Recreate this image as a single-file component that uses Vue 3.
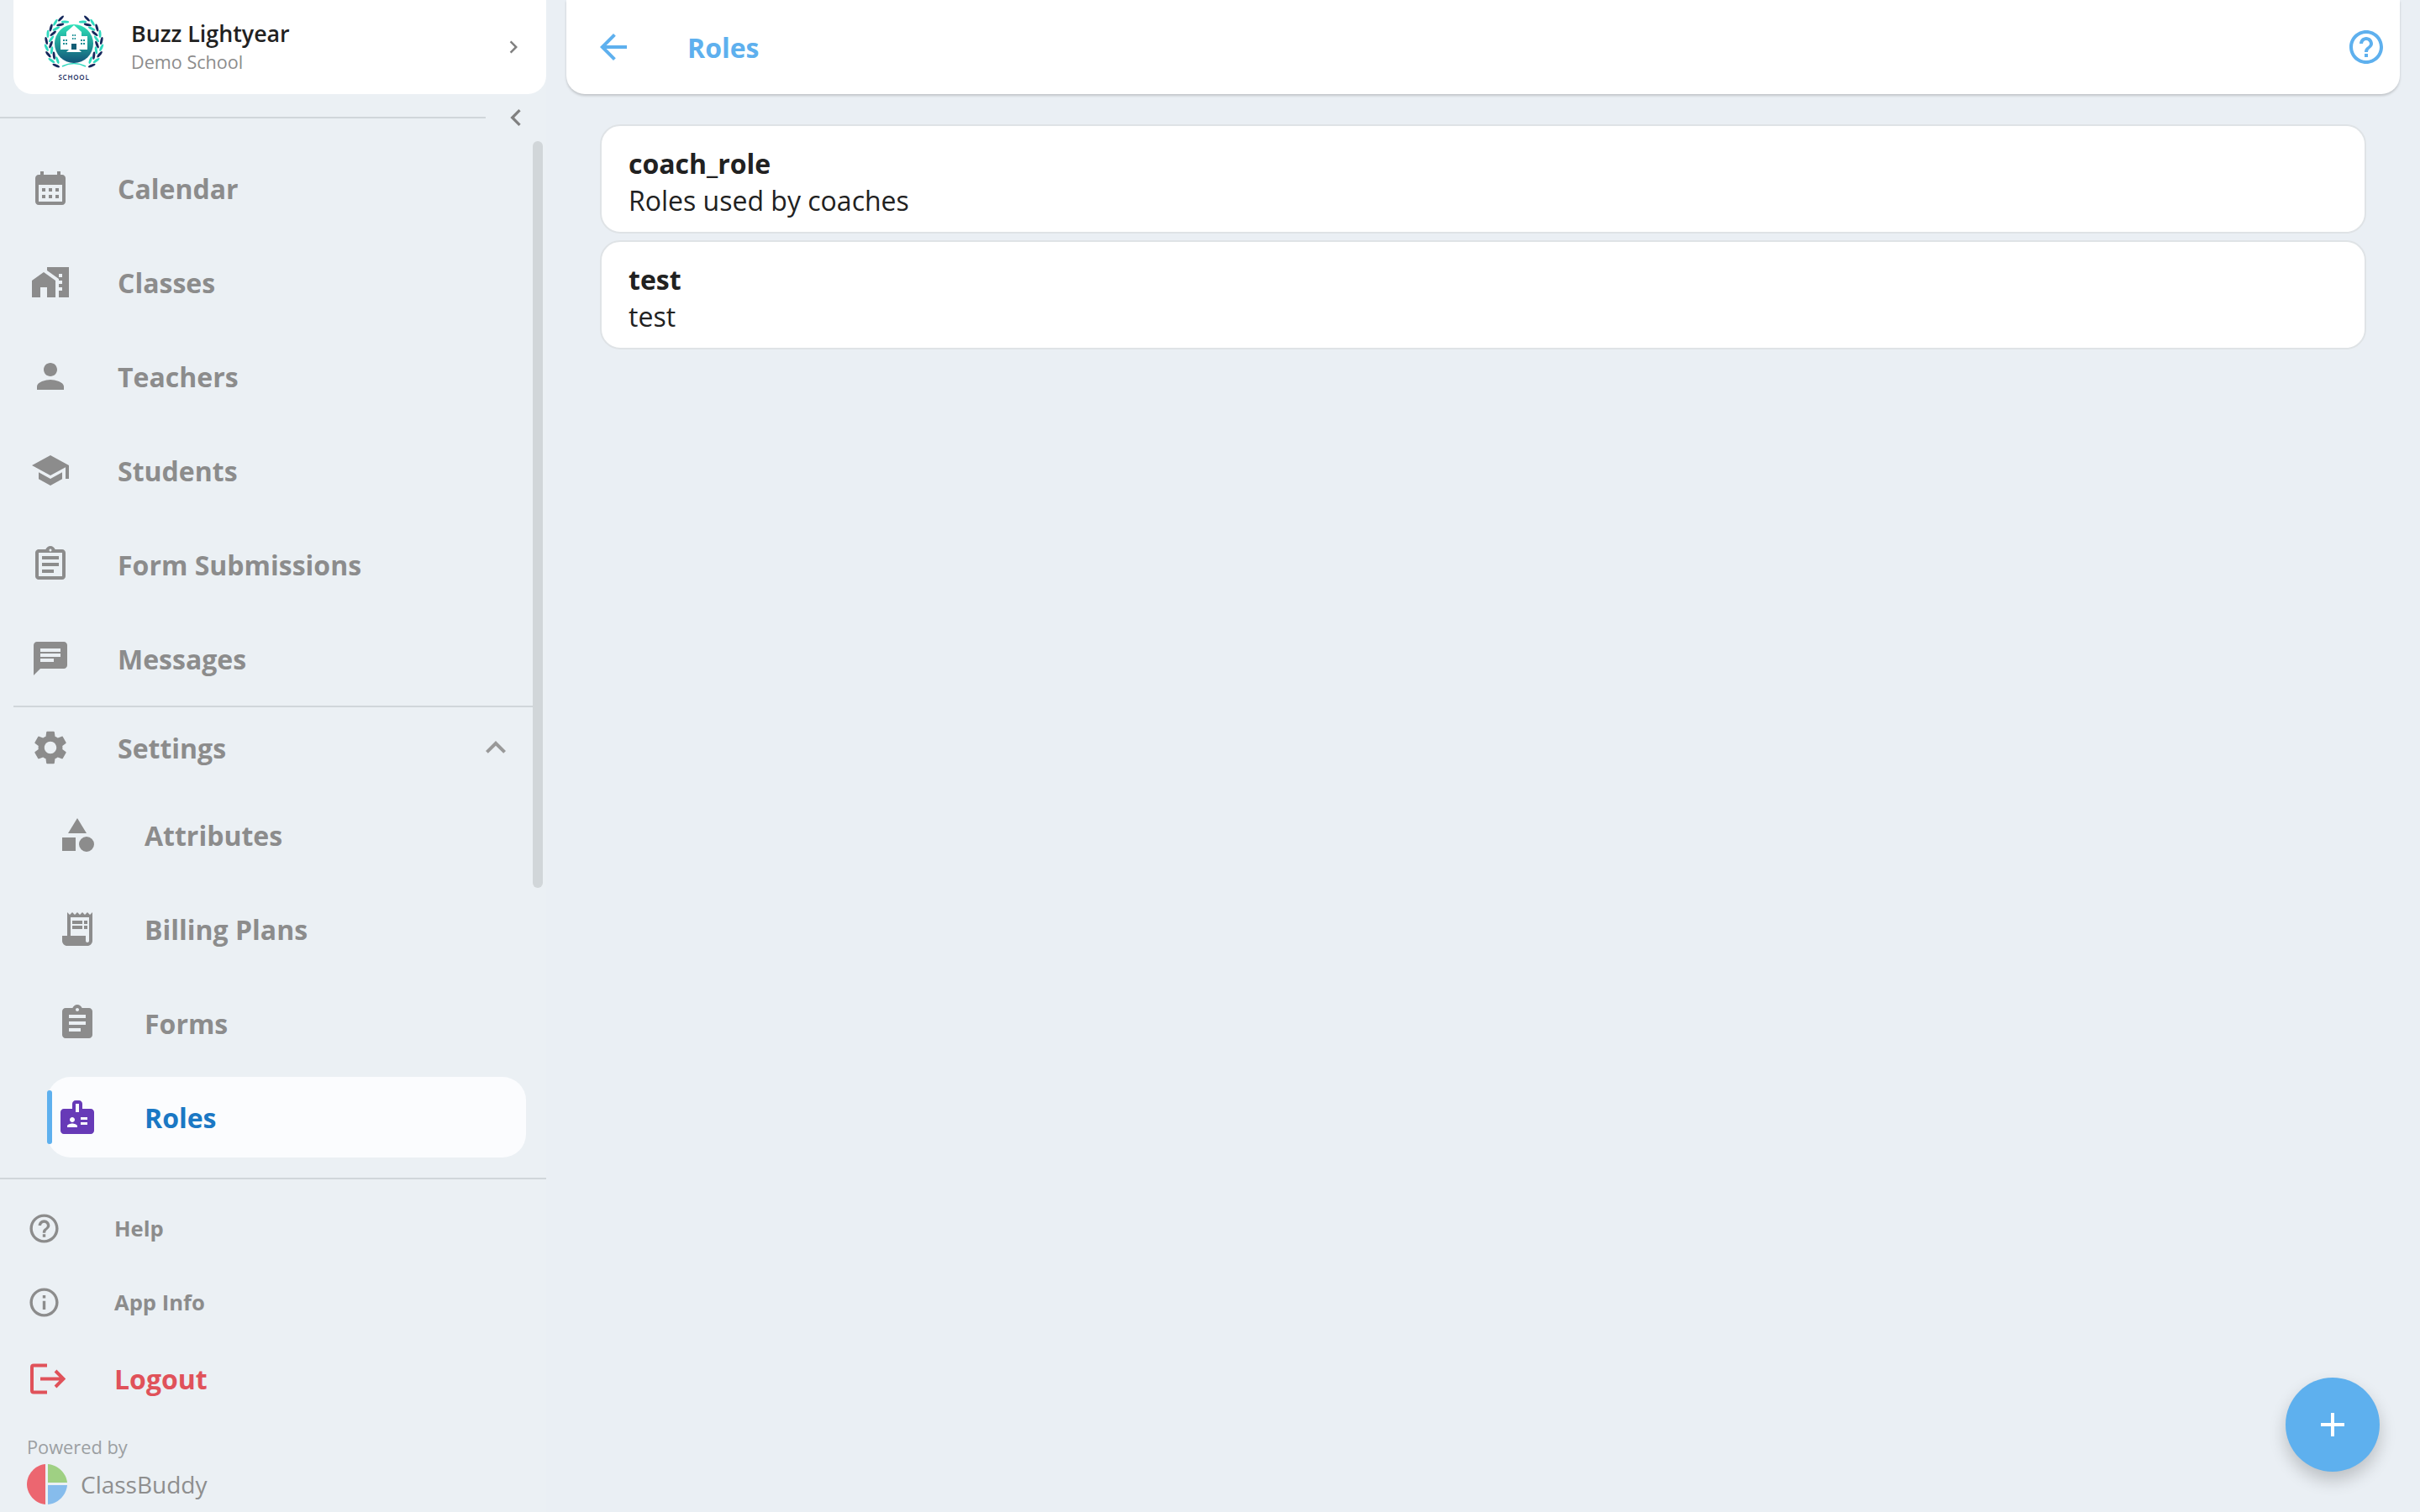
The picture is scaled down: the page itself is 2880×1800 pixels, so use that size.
<script setup>
const mainItems = [
  { label: 'Calendar', d: 'M19 4h-1V2h-2v2H8V2H6v2H5c-1.11 0-1.99.9-1.99 2L3 20c0 1.1.89 2 2 2h14c1.1 0 2-.9 2-2V6c0-1.1-.9-2-2-2zm0 16H5V10h14v10zM9 14H7v-2h2v2zm4 0h-2v-2h2v2zm4 0h-2v-2h2v2zm-8 4H7v-2h2v2zm4 0h-2v-2h2v2zm4 0h-2v-2h2v2z' },
  { label: 'Classes', d: 'M1 11v10h5v-6h4v6h5V11L8 6zM10 3v1.97l7 5V11h2v2h-2v2h2v2h-2v4h6V3H10zm9 6h-2V7h2v2z' },
  { label: 'Teachers', d: 'M12 12c2.21 0 4-1.79 4-4s-1.79-4-4-4-4 1.79-4 4 1.79 4 4 4zm0 2c-2.67 0-8 1.34-8 4v2h16v-2c0-2.66-5.33-4-8-4z' },
  { label: 'Students', d: 'M5 13.18v4L12 21l7-3.82v-4L12 17l-7-3.82zM12 3L1 9l11 6 9-4.91V17h2V9L12 3z' },
  { label: 'Form Submissions', d: 'M7 15h7v2H7zm0-4h10v2H7zm0-4h10v2H7zm12-4h-4.18C14.4 1.84 13.3 1 12 1c-1.3 0-2.4.84-2.82 2H5c-.14 0-.27.01-.4.04-.39.08-.74.28-1.01.55-.18.18-.33.4-.43.64-.1.23-.16.49-.16.77v14c0 .27.06.54.16.78s.25.45.43.64c.27.27.62.47 1.01.55.13.02.26.03.4.03h14c1.1 0 2-.9 2-2V5c0-1.1-.9-2-2-2zm-7-.25c.41 0 .75.34.75.75s-.34.75-.75.75-.75-.34-.75-.75.34-.75.75-.75zM19 19H5V5h14v14z' },
  { label: 'Messages', d: 'M20 2H4c-1.1 0-1.99.9-1.99 2L2 22l4-4h14c1.1 0 2-.9 2-2V4c0-1.1-.9-2-2-2zM6 9h12v2H6V9zm8 5H6v-2h8v2zm4-6H6V6h12v2z' },
]

const settingsItems = [
  { label: 'Attributes', d: 'M12 2l-5.5 9h11zM17.5 13a4.5 4.5 0 1 0 0 9 4.5 4.5 0 0 0 0-9zM3 13.5h8v8H3z' },
  { label: 'Billing Plans', d: 'M19.5 3.5 18 2l-1.5 1.5L15 2l-1.5 1.5L12 2l-1.5 1.5L9 2 7.5 3.5 6 2v14H3v3c0 1.66 1.34 3 3 3h12c1.66 0 3-1.34 3-3V2l-1.5 1.5zM19 19c0 .55-.45 1-1 1s-1-.45-1-1v-3H8V5h11v14zM9 7h6v2H9zm7 0h2v2h-2zm-7 3h6v2H9zm7 0h2v2h-2z' },
  { label: 'Forms', d: 'M19 3h-4.18C14.4 1.84 13.3 1 12 1c-1.3 0-2.4.84-2.82 2H5c-1.1 0-2 .9-2 2v14c0 1.1.9 2 2 2h14c1.1 0 2-.9 2-2V5c0-1.1-.9-2-2-2zm-7 0c.55 0 1 .45 1 1s-.45 1-1 1-1-.45-1-1 .45-1 1-1zm2 14H7v-2h7v2zm3-4H7v-2h10v2zm0-4H7V7h10v2z' },
  { label: 'Roles', active: true, d: 'M20 7h-5V4c0-1.1-.9-2-2-2h-2c-1.1 0-2 .9-2 2v3H4c-1.1 0-2 .9-2 2v11c0 1.1.9 2 2 2h16c1.1 0 2-.9 2-2V9c0-1.1-.9-2-2-2zM9 12c.83 0 1.5.67 1.5 1.5S9.83 15 9 15s-1.5-.67-1.5-1.5S8.17 12 9 12zm3 6H6v-.75c0-1 2-1.5 3-1.5s3 .5 3 1.5V18zm1-9h-2V4h2v5zm5 7.5h-4V15h4v1.5zm0-3h-4V12h4v1.5z' },
]

const gearPath = 'M19.14 12.94c.04-.3.06-.61.06-.94 0-.32-.02-.64-.07-.94l2.03-1.58c.18-.14.23-.41.12-.61l-1.92-3.32c-.12-.22-.37-.29-.59-.22l-2.39.96c-.5-.38-1.03-.7-1.62-.94l-.36-2.54c-.04-.24-.24-.41-.48-.41h-3.84c-.24 0-.43.17-.47.41l-.36 2.54c-.59.24-1.13.57-1.62.94l-2.39-.96c-.22-.08-.47 0-.59.22L2.74 8.87c-.12.21-.08.47.12.61l2.03 1.58c-.05.3-.09.63-.09.94s.02.64.07.94l-2.03 1.58c-.18.14-.23.41-.12.61l1.92 3.32c.12.22.37.29.59.22l2.39-.96c.5.38 1.03.7 1.62.94l.36 2.54c.05.24.24.41.48.41h3.84c.24 0 .44-.17.47-.41l.36-2.54c.59-.24 1.13-.56 1.62-.94l2.39.96c.22.08.47 0 .59-.22l1.92-3.32c.12-.22.07-.47-.12-.61l-2.01-1.58zM12 15.6c-1.98 0-3.6-1.62-3.6-3.6s1.62-3.6 3.6-3.6 3.6 1.62 3.6 3.6-1.62 3.6-3.6 3.6z'
const helpPath = 'M11 18h2v-2h-2v2zm1-16C6.48 2 2 6.48 2 12s4.48 10 10 10 10-4.48 10-10S17.52 2 12 2zm0 18c-4.41 0-8-3.59-8-8s3.59-8 8-8 8 3.59 8 8-3.59 8-8 8zm0-14c-2.21 0-4 1.79-4 4h2c0-1.1.9-2 2-2s2 .9 2 2c0 2-3 1.75-3 5h2c0-2.25 3-2.5 3-5 0-2.21-1.79-4-4-4z'
const infoPath = 'M11 7h2v2h-2zm0 4h2v6h-2zm1-9C6.48 2 2 6.48 2 12s4.48 10 10 10 10-4.48 10-10S17.52 2 12 2zm0 18c-4.41 0-8-3.59-8-8s3.59-8 8-8 8 3.59 8 8-3.59 8-8 8z'

const roles = [
  { name: 'coach_role', description: 'Roles used by coaches' },
  { name: 'test', description: 'test' },
]

// laurel leaves for the school crest, left side only, mirrored in the template
const leaves = []
for (let i = 0; i < 9; i++) {
  const deg = 118 + i * 14
  const rad = (deg * Math.PI) / 180
  const outerX = 36 + 33 * Math.cos(rad)
  const outerY = 35 - 34 * Math.sin(rad)
  const innerX = 36 + 27.5 * Math.cos(rad - 0.1)
  const innerY = 35 - 28 * Math.sin(rad - 0.1)
  leaves.push({ x: outerX, y: outerY, rot: 90 - deg - 18, color: i % 2 ? '#2fd9bf' : '#16285c' })
  leaves.push({ x: innerX, y: innerY, rot: 90 - deg + 30, color: i % 2 ? '#16285c' : '#2fd9bf' })
}
</script>

<template>
  <div class="app">
    <aside class="sidebar">
      <div class="profile">
        <svg class="crest" width="72" height="80" viewBox="0 0 72 80">
          <defs>
            <linearGradient id="crestFill" x1="0" y1="0" x2="0" y2="1">
              <stop offset="0" stop-color="#2fe3b9" />
              <stop offset="1" stop-color="#125478" />
            </linearGradient>
          </defs>
          <g v-for="side in [1, -1]" :key="side" :transform="side === 1 ? '' : 'translate(72 0) scale(-1 1)'">
            <ellipse v-for="(leaf, i) in leaves" :key="i" :cx="leaf.x" :cy="leaf.y" rx="4.6" ry="1.5" :fill="leaf.color"
              :transform="`rotate(${leaf.rot} ${leaf.x} ${leaf.y})`" />
          </g>
          <path d="M22 62q14-7 28 0" fill="none" stroke="#2fd9bf" stroke-width="1.6" />
          <circle cx="36" cy="35" r="23" fill="url(#crestFill)" />
          <path d="M27 21 36 13l9 8v5h7v16H20V26h7z" fill="#fff" />
          <path d="M34 24h1.5v2H34zm2.6 0h1.5v2h-1.5zM34 28h1.5v2H34zm2.6 0h1.5v2h-1.5zM23 30h2v2h-2zm3 0h2v2h-2zm18 0h2v2h-2zm3 0h2v2h-2zM23 34h2v2h-2zm3 0h2v2h-2zm18 0h2v2h-2zm3 0h2v2h-2z" fill="#1c8f95" />
          <path d="M33 35h6v7h-6z" fill="#125e76" />
          <path d="M30 42h12l3 3H27z" fill="#fff" />
          <text x="36" y="78" text-anchor="middle" class="crest-text">SCHOOL</text>
        </svg>
        <div class="profile-text">
          <div class="profile-name">Buzz Lightyear</div>
          <div class="profile-school">Demo School</div>
        </div>
        <svg class="profile-chevron" width="30" height="30" viewBox="0 0 24 24">
          <path d="M10 6 8.59 7.41 13.17 12l-4.58 4.59L10 18l6-6z" />
        </svg>
      </div>

      <div class="collapse-row">
        <div class="rule"></div>
        <svg width="40" height="40" viewBox="0 0 24 24">
          <path d="M15.41 7.41 14 6l-6 6 6 6 1.41-1.41L10.83 12z" />
        </svg>
      </div>

      <nav class="nav">
        <a v-for="item in mainItems" :key="item.label" class="nav-item">
          <svg class="nav-icon" width="48" height="48" viewBox="0 0 24 24"><path :d="item.d" /></svg>
          <span>{{ item.label }}</span>
        </a>

        <div class="nav-rule"></div>

        <a class="nav-item settings">
          <svg class="nav-icon" width="48" height="48" viewBox="0 0 24 24"><path :d="gearPath" /></svg>
          <span>Settings</span>
          <svg class="settings-chevron" width="48" height="48" viewBox="0 0 24 24">
            <path d="M12 8l-6 6 1.41 1.41L12 10.83l4.59 4.58L18 14z" />
          </svg>
        </a>

        <a v-for="item in settingsItems" :key="item.label" class="nav-item sub" :class="{ active: item.active }">
          <svg class="nav-icon" width="48" height="48" viewBox="0 0 24 24"><path :d="item.d" /></svg>
          <span>{{ item.label }}</span>
        </a>

        <div class="scroll-thumb"></div>
      </nav>

      <div class="bottom">
        <a class="bottom-item">
          <svg width="41" height="41" viewBox="0 0 24 24"><path :d="helpPath" /></svg>
          <span>Help</span>
        </a>
        <a class="bottom-item">
          <svg width="41" height="41" viewBox="0 0 24 24"><path :d="infoPath" /></svg>
          <span>App Info</span>
        </a>
        <a class="bottom-item logout">
          <svg class="logout-icon" width="46" height="41" viewBox="0 0 46 41">
            <path d="M24 4.5H8a2 2 0 0 0-2 2v28a2 2 0 0 0 2 2h16" fill="none" stroke="#e0525a" stroke-width="4" />
            <path d="M16 20.5h27M34 11l9.5 9.5L34 30" fill="none" stroke="#e0525a" stroke-width="4" />
          </svg>
          <span>Logout</span>
        </a>
        <div class="powered">Powered by</div>
        <div class="brand">
          <svg width="48" height="48" viewBox="0 0 48 48">
            <path d="M22 0v48C10 47 0 36 0 24S10 1 22 0z" fill="#ec6670" />
            <path d="M25 0c12 1 22 11 23 22H25z" fill="#9fd083" />
            <path d="M25 25h23c-1 12-11 22-23 23z" fill="#86bcec" />
          </svg>
          <span>ClassBuddy</span>
        </div>
      </div>
    </aside>

    <main class="main">
      <header class="topbar">
        <svg class="back" width="48" height="48" viewBox="0 0 24 24">
          <path d="M20 11H7.83l5.59-5.59L12 4l-8 8 8 8 1.41-1.41L7.83 13H20v-2z" />
        </svg>
        <h1>Roles</h1>
        <svg class="topbar-help" width="48" height="48" viewBox="0 0 24 24"><path :d="helpPath" /></svg>
      </header>

      <section class="role-list">
        <div v-for="role in roles" :key="role.name" class="role-card">
          <div class="role-name">{{ role.name }}</div>
          <div class="role-desc">{{ role.description }}</div>
        </div>
      </section>

      <button class="fab">
        <svg width="48" height="48" viewBox="0 0 24 24"><path d="M19 13h-6v6h-2v-6H5v-2h6V5h2v6h6v2z" /></svg>
      </button>
    </main>
  </div>
</template>

<style>
html,
body {
  margin: 0;
  background: #ebf0f4;
}
</style>

<style scoped>
.app {
  display: flex;
  width: 2880px;
  height: 1800px;
  overflow: hidden;
  background: #ebf0f4;
  font-family: "Open Sans", sans-serif;
  color: #212121;
}

.sidebar {
  display: flex;
  flex-direction: column;
  flex: none;
  width: 650px;
  height: 1800px;
  color: #8c8c8c;
  fill: #8c8c8c;
}

.profile {
  display: flex;
  align-items: center;
  height: 112px;
  margin-left: 16px;
  padding-left: 36px;
  padding-right: 24px;
  box-sizing: border-box;
  flex: none;
  background: #fff;
  border-radius: 0 0 22px 22px;
}

.crest {
  flex: none;
  margin-top: 2px;
}

.crest-text {
  font-family: "Open Sans", sans-serif;
  font-size: 8px;
  font-weight: 600;
  letter-spacing: 0.8px;
  fill: #16285c;
}

.profile-text {
  flex: 1;
  margin-left: 32px;
}

.profile-name {
  font-size: 26.8px;
  font-weight: 600;
  line-height: 34px;
  margin-top: 1px;
  color: #212121;
}

.profile-school {
  font-size: 21.6px;
  line-height: 34px;
  color: #8c8c8c;
}

.profile-chevron {
  flex: none;
  fill: #808080;
}

.collapse-row {
  display: flex;
  align-items: center;
  flex: none;
  height: 56px;
  fill: #808080;
}

.rule {
  width: 578px;
  height: 2px;
  background: #d0d6da;
}

.collapse-row svg {
  margin-left: 16px;
}

.nav {
  position: relative;
  flex: none;
  height: 1234px;
}

.nav-item {
  display: flex;
  align-items: center;
  height: 112px;
  padding-left: 36px;
  box-sizing: border-box;
  font-size: 32px;
  font-weight: 700;
}

.nav-icon {
  flex: none;
  margin-right: 56px;
}

.nav-rule {
  width: 618px;
  height: 2px;
  margin-left: 16px;
  background: #d0d6da;
}

.settings {
  height: 96px;
  position: relative;
}

.settings-chevron {
  margin-left: auto;
  margin-right: 36px;
  fill: #999;
}

.sub {
  padding-left: 68px;
}

.active {
  position: relative;
  height: 96px;
  margin: 8px 24px 8px 56px;
  padding-left: 12px;
  background: #fbfcfe;
  border-radius: 28px;
  color: #1b78c4;
  fill: #673ab7;
}

.active::before {
  content: "";
  position: absolute;
  left: 0;
  top: 16px;
  bottom: 16px;
  width: 6px;
  border-radius: 3px;
  background: #5eb0ee;
}

.scroll-thumb {
  position: absolute;
  left: 634px;
  top: 0;
  width: 12px;
  height: 889px;
  border-radius: 6px;
  background: #d1d6d9;
}

.bottom {
  flex: 1;
  border-top: 2px solid #d0d6da;
  padding-top: 38px;
}

.bottom-item {
  display: flex;
  align-items: center;
  height: 41px;
  margin-bottom: 47px;
  padding-left: 32px;
  font-size: 25.6px;
  font-weight: 700;
}

.bottom-item svg {
  flex: none;
  margin-right: 63px;
}

.bottom-item .logout-icon {
  margin-right: 58px;
}

.logout {
  margin-top: 50px;
  margin-bottom: 0;
  font-size: 32px;
  color: #e0525a;
  fill: #e0525a;
}

.powered {
  margin-top: 46px;
  margin-left: 32px;
  font-size: 21.8px;
  font-weight: 400;
  line-height: 30px;
  color: #9b9fa2;
}

.brand {
  display: flex;
  align-items: center;
  margin-top: 5px;
  margin-left: 32px;
  font-size: 28px;
  font-weight: 400;
  color: #8e8e8e;
}

.brand span {
  margin-left: 16px;
}

.main {
  position: relative;
  flex: 1;
  padding-left: 24px;
  padding-right: 24px;
  min-width: 0;
  background: #eaeff4;
}

.topbar {
  display: flex;
  align-items: center;
  height: 112px;
  padding-left: 32px;
  padding-right: 16px;
  background: #fff;
  border-radius: 0 0 22px 22px;
  box-shadow: 0 2px 3px rgba(0, 0, 0, 0.18);
  fill: #5eb0ee;
  color: #5eb0ee;
}

.topbar h1 {
  margin: 0 0 0 64px;
  flex: 1;
  font-size: 32px;
  font-weight: 700;
}

.role-list {
  display: flex;
  flex-direction: column;
  gap: 8px;
  margin: 36px 40px 0;
}

.role-card {
  height: 130px;
  padding: 23px 32px 0;
  box-sizing: border-box;
  background: #fff;
  border: 2px solid #dfe3e6;
  border-radius: 24px;
  font-size: 32px;
  line-height: 44px;
}

.role-name {
  font-weight: 700;
  color: #212121;
}

.role-desc {
  font-weight: 400;
  color: #212121;
}

.fab {
  position: absolute;
  right: 48px;
  bottom: 48px;
  display: flex;
  align-items: center;
  justify-content: center;
  width: 112px;
  height: 112px;
  padding: 0;
  border: none;
  border-radius: 50%;
  background: #5eb0ee;
  fill: #fff;
  box-shadow: 0 10px 20px rgba(0, 0, 0, 0.2);
}
</style>
